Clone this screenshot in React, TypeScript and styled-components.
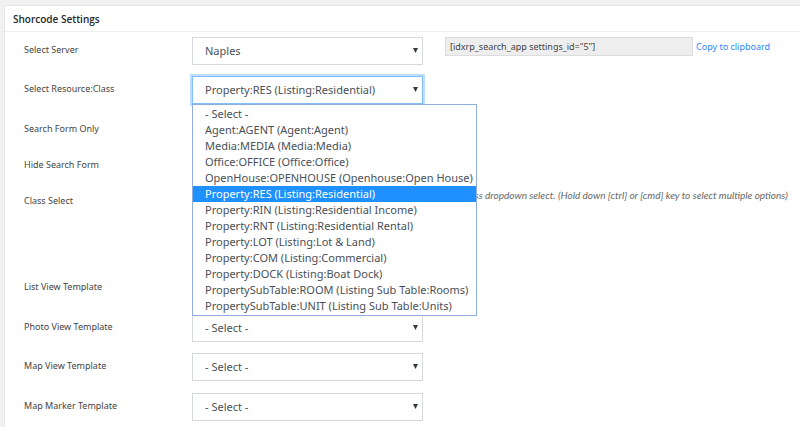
import React from "react";
import styled, { createGlobalStyle, css } from "styled-components";

const GlobalStyle = createGlobalStyle`
  * { box-sizing: border-box; }
  body {
    margin: 0;
    background: #f1f1f1;
    color: #444;
    font-family: "Noto Sans", "Open Sans", sans-serif;
    font-size: 9px;
    overflow: hidden;
  }
`;

const Page = styled.main`
  padding: 5px 0 0 4px;
  min-height: 100vh;
  display: flex;
`;

const Card = styled.section`
  flex: 1;
  min-width: 0;
  background: #fff;
  border: 1px solid #e5e5e5;
  border-right: 0;
  border-bottom: 0;
`;

const CardTitle = styled.h2`
  margin: 0;
  padding: 5px 8px 4px;
  border-bottom: 1px solid #eee;
  color: #23282d;
  font-family: "Open Sans", sans-serif;
  font-size: 10px;
  font-weight: 600;
  line-height: 16px;
`;

const Form = styled.form`
  padding: 5px 0 0 19px;
`;

const Row = styled.div<{ $height: number }>`
  display: grid;
  grid-template-columns: 168px 231px minmax(0, 1fr);
  align-items: start;
  min-height: ${(p) => p.$height}px;
`;

const Label = styled.label`
  line-height: 26px;
  color: #444;
`;

const SelectBox = styled.div`
  position: relative;
`;

const Select = styled.select<{ $focused?: boolean }>`
  display: block;
  appearance: none;
  width: 100%;
  height: 28px;
  padding: 0 24px 0 12px;
  border: 1px solid #d5d9df;
  border-radius: 0;
  outline: none;
  background: #fff;
  color: #495057;
  font-family: inherit;
  font-size: 11px;
  line-height: 26px;
  ${(p) =>
    p.$focused &&
    css`
      border-color: #80bdff;
      box-shadow: 0 0 0 2px #bfdeff;
    `}
`;

const Arrow = styled.svg`
  position: absolute;
  top: 11px;
  right: 5px;
  width: 5px;
  height: 5px;
  fill: #343a40;
  pointer-events: none;
`;

const Popup = styled.ul`
  position: absolute;
  z-index: 2;
  top: 28px;
  left: 0;
  width: 285px;
  margin: 0;
  padding: 1px 0;
  border: 1px solid #8eaee0;
  background: #fff;
  list-style: none;
`;

const Option = styled.li<{ $selected: boolean }>`
  padding: 0 12px;
  background: ${(p) => (p.$selected ? "#1e90ff" : "transparent")};
  color: ${(p) => (p.$selected ? "#fff" : "#495057")};
  font-size: 11px;
  line-height: 16px;
  white-space: nowrap;
`;

const Checkbox = styled.input`
  width: 12px;
  height: 12px;
  margin: 7px 0;
`;

const MultiSelect = styled.select`
  width: 100%;
  height: 74px;
  border: 1px solid #d5d9df;
  background: #fff;
  font-family: inherit;
  font-size: 11px;
`;

const Side = styled.div`
  display: flex;
  align-items: center;
  gap: 3px;
  padding-left: 22px;
`;

const Shortcode = styled.input`
  width: 248px;
  height: 19px;
  padding: 0 4px;
  border: 1px solid #ddd;
  background: #eee;
  color: #444;
  font-family: inherit;
  font-size: 9px;
`;

const CopyLink = styled.a`
  color: #2e86fb;
  text-decoration: none;
  white-space: nowrap;
`;

const Hint = styled.em`
  color: #666;
  font-family: Lato, sans-serif;
  font-size: 10px;
  line-height: 14px;
  white-space: nowrap;
`;

const classes = [
  "- Select -",
  "Agent:AGENT (Agent:Agent)",
  "Media:MEDIA (Media:Media)",
  "Office:OFFICE (Office:Office)",
  "OpenHouse:OPENHOUSE (Openhouse:Open House)",
  "Property:RES (Listing:Residential)",
  "Property:RIN (Listing:Residential Income)",
  "Property:RNT (Listing:Residential Rental)",
  "Property:LOT (Listing:Lot & Land)",
  "Property:COM (Listing:Commercial)",
  "Property:DOCK (Listing:Boat Dock)",
  "PropertySubTable:ROOM (Listing Sub Table:Rooms)",
  "PropertySubTable:UNIT (Listing Sub Table:Units)",
];
const current = "Property:RES (Listing:Residential)";

const templates = [
  { id: "list", label: "List View Template", height: 40 },
  { id: "photo", label: "Photo View Template", height: 39 },
  { id: "map", label: "Map View Template", height: 40 },
  { id: "marker", label: "Map Marker Template", height: 28 },
];

function Dropdown(props: {
  id: string;
  value: string;
  focused?: boolean;
  children?: React.ReactNode;
}) {
  return (
    <SelectBox>
      <Select id={props.id} defaultValue={props.value} $focused={props.focused}>
        <option>{props.value}</option>
      </Select>
      <Arrow viewBox="0 0 5 5" aria-hidden="true">
        <path d="M0 0H5L2.5 5Z" />
      </Arrow>
      {props.children}
    </SelectBox>
  );
}

export default function App() {
  return (
    <>
      <GlobalStyle />
      <Page>
        <Card>
          <CardTitle>Shorcode Settings</CardTitle>
          <Form>
            <Row $height={39}>
              <Label htmlFor="server">Select Server</Label>
              <Dropdown id="server" value="Naples" />
              <Side>
                <Shortcode
                  aria-label="Shortcode"
                  readOnly
                  value={'[idxrp_search_app settings_id="5"]'}
                />
                <CopyLink href="#copy">Copy to clipboard</CopyLink>
              </Side>
            </Row>
            <Row $height={40}>
              <Label htmlFor="resource">Select Resource:Class</Label>
              <Dropdown id="resource" value={current} focused>
                <Popup role="listbox" aria-label="Select Resource:Class">
                  {classes.map((name) => (
                    <Option
                      key={name}
                      role="option"
                      aria-selected={name === current}
                      $selected={name === current}
                    >
                      {name}
                    </Option>
                  ))}
                </Popup>
              </Dropdown>
            </Row>
            <Row $height={36}>
              <Label htmlFor="form-only">Search Form Only</Label>
              <Checkbox id="form-only" type="checkbox" />
            </Row>
            <Row $height={36}>
              <Label htmlFor="hide-form">Hide Search Form</Label>
              <Checkbox id="hide-form" type="checkbox" />
            </Row>
            <Row $height={86}>
              <Label htmlFor="class-select">Class Select</Label>
              <MultiSelect id="class-select" multiple />
              <Side>
                <Hint>
                  The class dropdown select. (Hold down [ctrl] or [cmd] key to
                  select multiple options)
                </Hint>
              </Side>
            </Row>
            {templates.map((t) => (
              <Row key={t.id} $height={t.height}>
                <Label htmlFor={t.id}>{t.label}</Label>
                <Dropdown id={t.id} value="- Select -" />
              </Row>
            ))}
          </Form>
        </Card>
      </Page>
    </>
  );
}
